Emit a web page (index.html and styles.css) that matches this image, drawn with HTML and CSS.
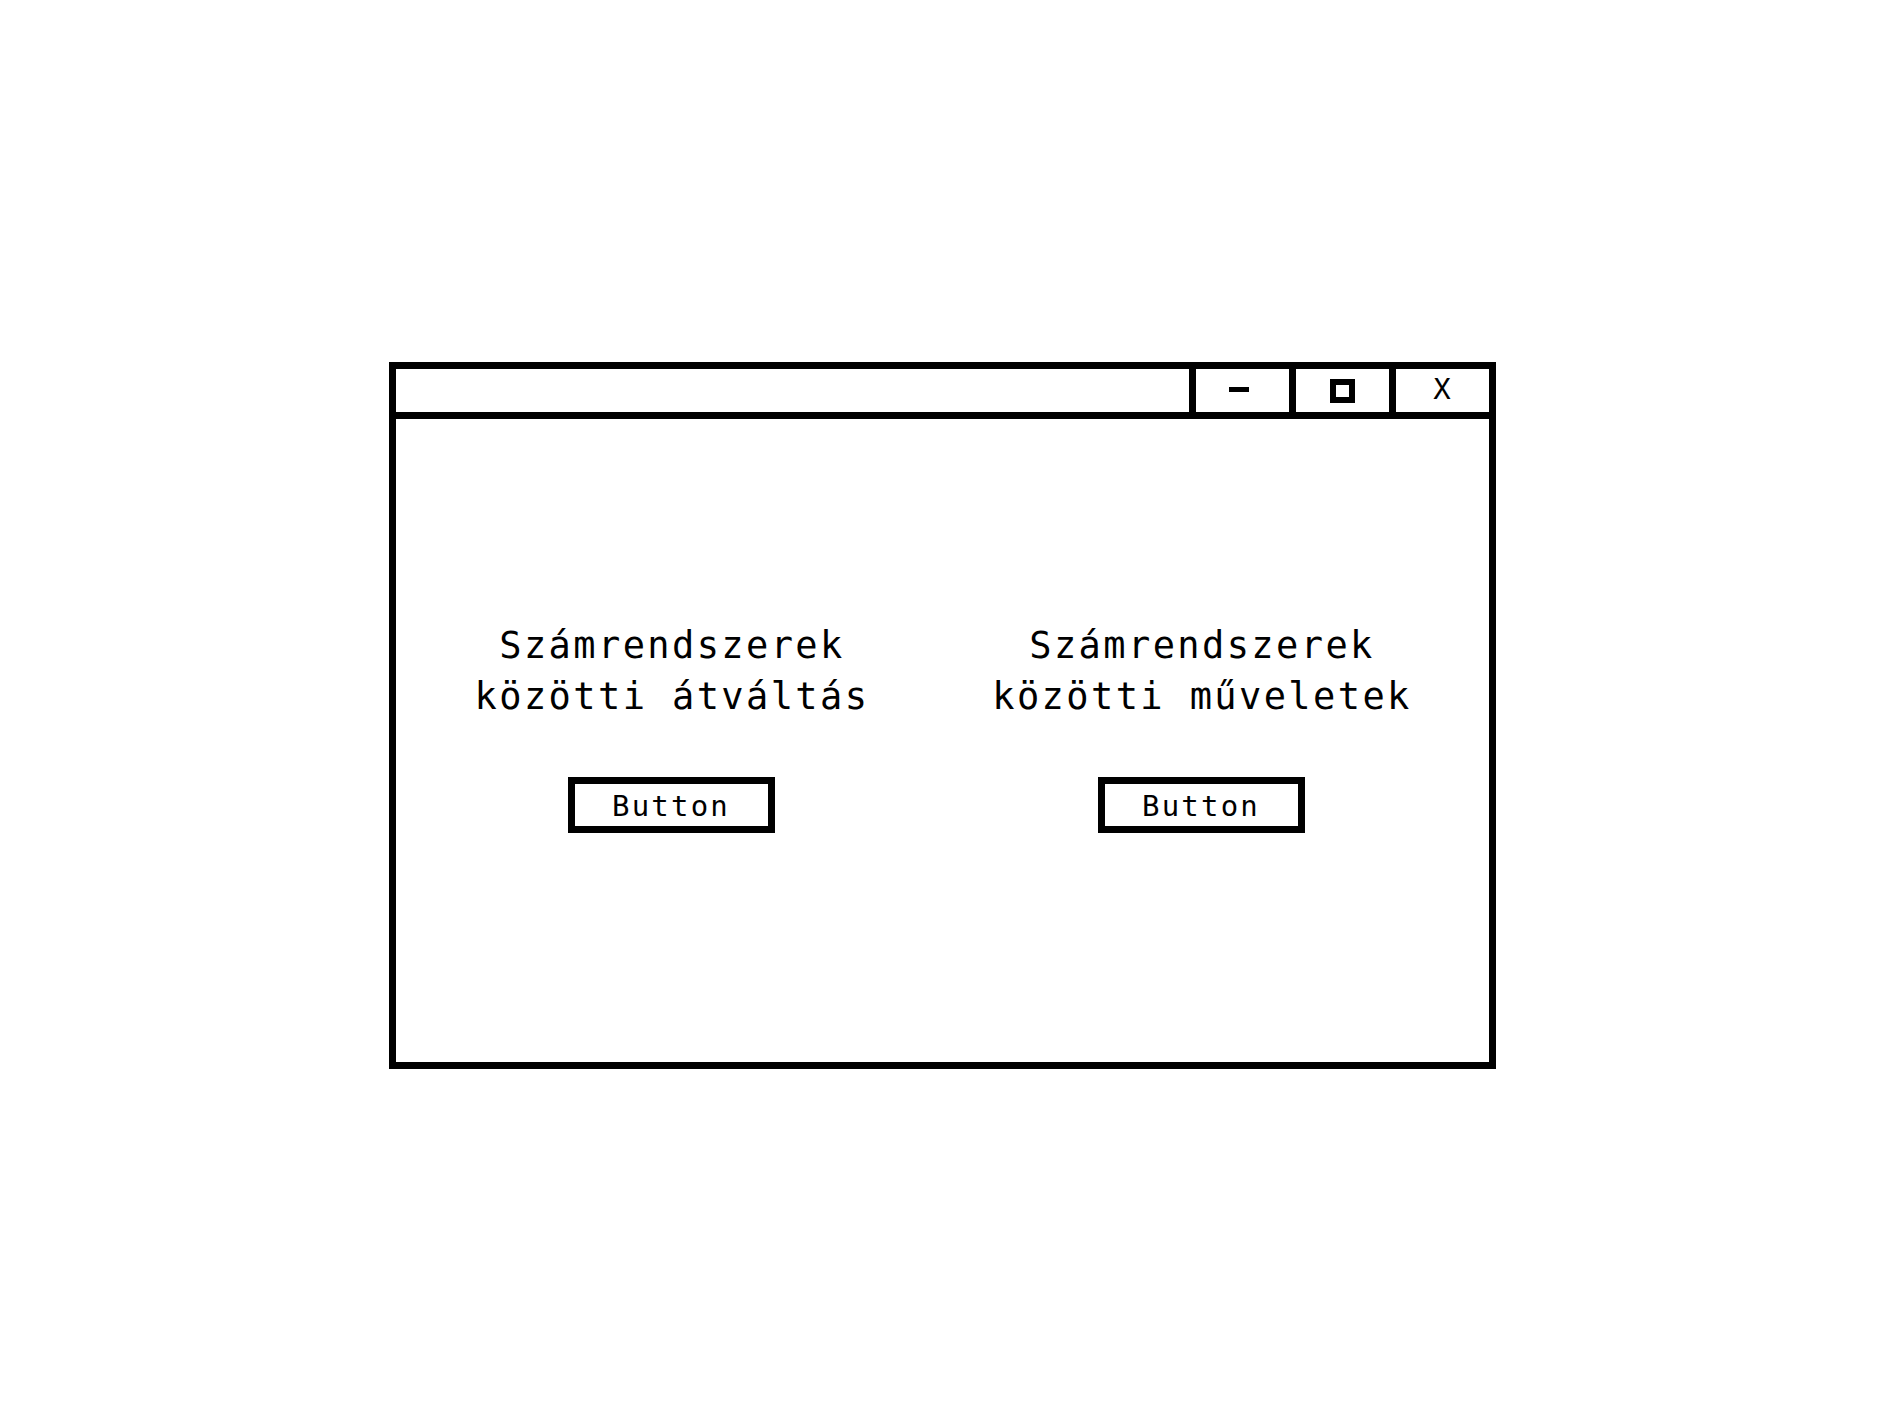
FILE: index.html
```html
<!DOCTYPE html>
<html>
<head>
    <link rel="stylesheet" href="styles.css">
</head>
<body>
  <div class="page">
    <div class="window">
      <div class="titlebar">
        <div class="title"></div>
        <div class="win-btn"><span class="icon-min"></span></div>
        <div class="win-btn"><span class="icon-max"></span></div>
        <div class="win-btn"><span class="icon-close">X</span></div>
      </div>
      <div class="content">
        <div class="column">
          <div class="heading">Számrendszerek<br>közötti átváltás</div>
          <button class="btn">Button</button>
        </div>
        <div class="column">
          <div class="heading">Számrendszerek<br>közötti műveletek</div>
          <button class="btn">Button</button>
        </div>
      </div>
    </div>
  </div>
</body>
</html>
```

FILE: styles.css
```css
body {
    margin: 0;
    background: #fff;
    color: #000;
    font-family: "DejaVu Sans Mono", "Liberation Mono", monospace;
}

.page {
    padding: 362px 0 0 389px;
}

.window {
    width: 1107px;
    height: 707px;
    box-sizing: border-box;
    border: 7px solid #000;
    display: flex;
    flex-direction: column;
}

.titlebar {
    display: flex;
    height: 43px;
    border-bottom: 7px solid #000;
}

.title {
    flex: 1;
}

.win-btn {
    width: 93px;
    border-left: 7px solid #000;
    display: flex;
    align-items: center;
    justify-content: center;
}

.icon-min {
    width: 20px;
    height: 5px;
    background: #000;
    margin: 0 7px 3px 0;
}

.icon-max {
    width: 25px;
    height: 24px;
    box-sizing: border-box;
    border: 6px solid #000;
    margin-top: 1px;
}

.icon-close {
    font-size: 29px;
    line-height: 1;
    margin: 0 1px 2px 0;
}

.content {
    flex: 1;
    display: grid;
    grid-template-columns: 530px 530px;
    padding: 201px 0 0 10px;
}

.column {
    display: flex;
    flex-direction: column;
    align-items: center;
}

.heading {
    font-size: 37px;
    line-height: 51px;
    letter-spacing: 2.4px;
    padding-left: 2px;
    text-align: center;
}

.btn {
    margin-top: 55px;
    width: 207px;
    box-sizing: border-box;
    border: 7px solid #000;
    background: #fff;
    color: #000;
    font-family: inherit;
    font-size: 29px;
    letter-spacing: 2.2px;
    line-height: 36px;
    padding: 4px 0 2px;
    text-align: center;
}
```
